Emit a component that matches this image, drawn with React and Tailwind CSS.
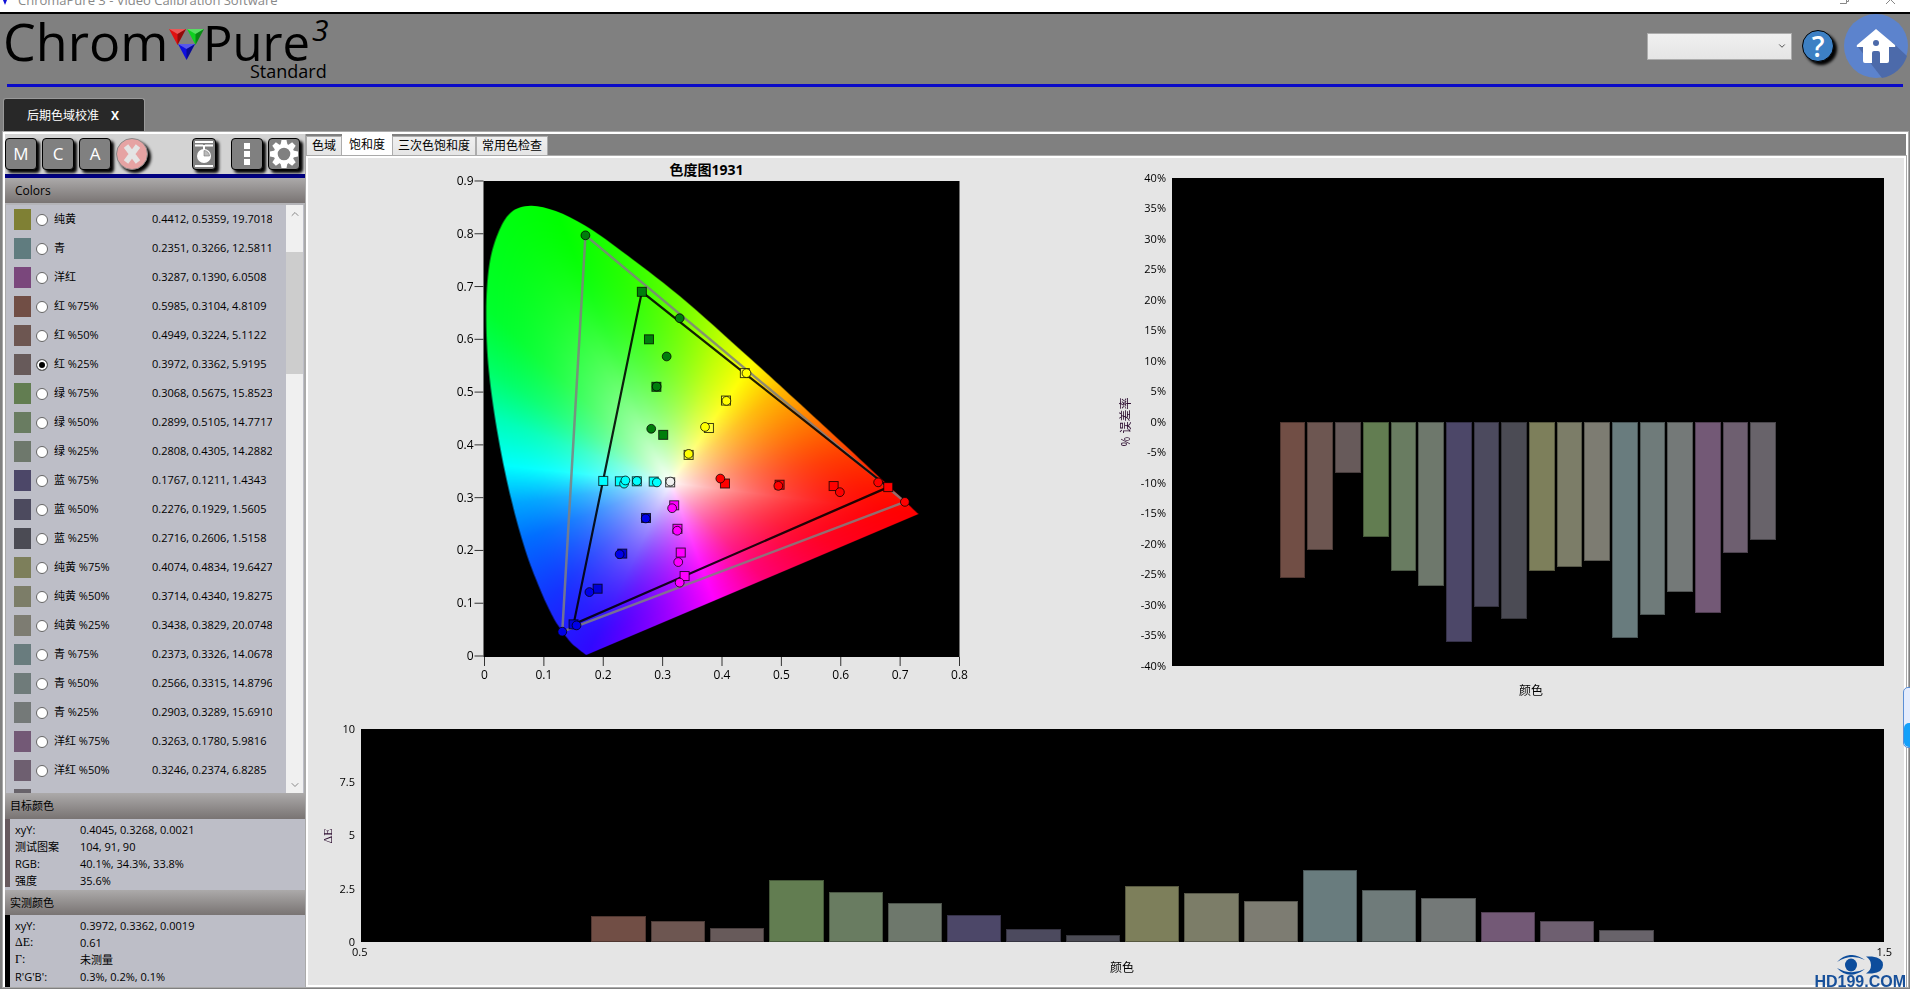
import React, { useEffect, useRef, useState } from "react";
import { FiChevronDown, FiChevronUp } from "react-icons/fi";

const readings = [
  { name: "纯黄", color: "#7f8034", xyY: "0.4412, 0.5359, 19.7018" },
  { name: "青", color: "#607c7f", xyY: "0.2351, 0.3266, 12.5811" },
  { name: "洋红", color: "#7a477c", xyY: "0.3287, 0.1390, 6.0508" },
  { name: "红 %75%", color: "#714e45", xyY: "0.5985, 0.3104, 4.8109", error: -25.6, deltaE: 1.2 },
  { name: "红 %50%", color: "#6d5651", xyY: "0.4949, 0.3224, 5.1122", error: -21, deltaE: 0.97 },
  { name: "红 %25%", color: "#675a5a", xyY: "0.3972, 0.3362, 5.9195", error: -8.4, deltaE: 0.64 },
  { name: "绿 %75%", color: "#627d51", xyY: "0.3068, 0.5675, 15.8523", error: -18.9, deltaE: 2.9 },
  { name: "绿 %50%", color: "#697c61", xyY: "0.2899, 0.5105, 14.7717", error: -24.4, deltaE: 2.37 },
  { name: "绿 %25%", color: "#6e786c", xyY: "0.2808, 0.4305, 14.2882", error: -26.9, deltaE: 1.82 },
  { name: "蓝 %75%", color: "#4c4768", xyY: "0.1767, 0.1211, 1.4343", error: -36, deltaE: 1.25 },
  { name: "蓝 %50%", color: "#4c4a5e", xyY: "0.2276, 0.1929, 1.5605", error: -30.3, deltaE: 0.61 },
  { name: "蓝 %25%", color: "#4b4b54", xyY: "0.2716, 0.2606, 1.5158", error: -32.3, deltaE: 0.33 },
  { name: "纯黄 %75%", color: "#7d7f5b", xyY: "0.4074, 0.4834, 19.6427", error: -24.5, deltaE: 2.63 },
  { name: "纯黄 %50%", color: "#7c7d68", xyY: "0.3714, 0.4340, 19.8275", error: -23.8, deltaE: 2.3 },
  { name: "纯黄 %25%", color: "#7d7c72", xyY: "0.3438, 0.3829, 20.0748", error: -22.8, deltaE: 1.93 },
  { name: "青 %75%", color: "#697c7e", xyY: "0.2373, 0.3326, 14.0678", error: -35.4, deltaE: 3.37 },
  { name: "青 %50%", color: "#6f7b7a", xyY: "0.2566, 0.3315, 14.8796", error: -31.6, deltaE: 2.46 },
  { name: "青 %25%", color: "#747978", xyY: "0.2903, 0.3289, 15.6910", error: -27.9, deltaE: 2.08 },
  { name: "洋红 %75%", color: "#735976", xyY: "0.3263, 0.1780, 5.9816", error: -31.3, deltaE: 1.42 },
  { name: "洋红 %50%", color: "#6e5f70", xyY: "0.3246, 0.2374, 6.8285", error: -21.5, deltaE: 0.99 },
  { name: "洋红 %25%", color: "#68636a", xyY: "0.3160, 0.2800, 7.9120", error: -19.3, deltaE: 0.58 },
];

const bars = readings.filter((r) => r.error !== undefined);

const targetInfo = [
  ["xyY:", "0.4045, 0.3268, 0.0021"],
  ["测试图案", "104, 91, 90"],
  ["RGB:", "40.1%, 34.3%, 33.8%"],
  ["强度", "35.6%"],
];

const measuredInfo = [
  ["xyY:", "0.3972, 0.3362, 0.0019"],
  ["ΔE:", "0.61"],
  ["Γ:", "未测量"],
  ["R'G'B':", "0.3%, 0.2%, 0.1%"],
];

// spectral locus, CIE 1931 xy
const locus = [
  [0.1714, 0.002], [0.1644, 0.0075], [0.1566, 0.0145], [0.144, 0.0275], [0.1241, 0.0578],
  [0.1096, 0.0868], [0.0913, 0.1327], [0.0687, 0.2007], [0.0454, 0.295], [0.0235, 0.4127],
  [0.0075, 0.5384], [0.0028, 0.65], [0.008, 0.74], [0.0225, 0.8], [0.044, 0.84],
  [0.0775, 0.853], [0.12, 0.843], [0.17, 0.815], [0.23, 0.768], [0.3287, 0.682],
  [0.448, 0.563], [0.5775, 0.43], [0.66, 0.344], [0.731, 0.269],
];

const WHITE = [0.3127, 0.329];

// fully saturated colours at points round the locus
const edgeColors = [
  [0.17, 0.002, [48, 8, 255]],
  [0.1, 0.1, [20, 50, 255]],
  [0.06, 0.22, [0, 110, 255]],
  [0.045, 0.29, [0, 165, 255]],
  [0.034, 0.362, [0, 255, 255]],
  [0.02, 0.45, [0, 255, 185]],
  [0.01, 0.54, [0, 255, 105]],
  [0.004, 0.66, [0, 255, 45]],
  [0.04, 0.83, [0, 255, 15]],
  [0.12, 0.843, [0, 255, 0]],
  [0.23, 0.768, [40, 255, 0]],
  [0.33, 0.68, [110, 255, 0]],
  [0.4, 0.61, [190, 255, 0]],
  [0.452, 0.559, [255, 255, 0]],
  [0.5, 0.51, [255, 185, 0]],
  [0.57, 0.438, [255, 110, 0]],
  [0.63, 0.375, [255, 55, 0]],
  [0.731, 0.269, [255, 0, 0]],
  [0.6, 0.206, [255, 0, 35]],
  [0.47, 0.145, [255, 0, 120]],
  [0.386, 0.104, [255, 0, 255]],
  [0.3, 0.063, [150, 0, 255]],
  [0.23, 0.03, [90, 0, 255]],
];

const plotX = (x) => x * 593.75;
const plotY = (y) => 475 - y * 527.8;

const gamutSquares = [
  ["#007e0b", [[0.265, 0.69], [0.277, 0.6], [0.2895, 0.51], [0.301, 0.419]]],
  ["#ffff3c", [[0.4385, 0.536], [0.4067, 0.484], [0.378, 0.432], [0.3438, 0.381]]],
  ["#ff0000", [[0.68, 0.32], [0.588, 0.322], [0.497, 0.3245], [0.405, 0.3268]]],
  ["#0000d8", [[0.15, 0.06], [0.1905, 0.1275], [0.232, 0.194], [0.272, 0.2615]]],
  ["#00ffff", [[0.2, 0.3317], [0.228, 0.331], [0.2565, 0.331], [0.285, 0.3305]]],
  ["#ff00ff", [[0.337, 0.1515], [0.3305, 0.196], [0.325, 0.241], [0.3195, 0.2855]]],
  ["#f0f0f0", [[0.3127, 0.329]]],
];

const gamutCircles = [
  ["#007e0b", [[0.17, 0.797], [0.3287, 0.64], [0.3068, 0.5675], [0.2899, 0.5105], [0.2808, 0.4305]]],
  ["#ffff00", [[0.4412, 0.5359], [0.4074, 0.4834], [0.3714, 0.434], [0.3438, 0.3829]]],
  ["#ff0000", [[0.663, 0.329], [0.708, 0.292], [0.5985, 0.3104], [0.4949, 0.3224], [0.3972, 0.3362]]],
  ["#0000e8", [[0.131, 0.046], [0.155, 0.058], [0.1767, 0.1211], [0.2276, 0.1929], [0.2716, 0.2606]]],
  ["#00ffff", [[0.2351, 0.3266], [0.2373, 0.3326], [0.2566, 0.3315], [0.2903, 0.3289]]],
  ["#ff00ff", [[0.3287, 0.139], [0.3263, 0.178], [0.3246, 0.2374], [0.316, 0.28]]],
  ["#f0f0f0", [[0.313, 0.3305]]],
];

// distance from the white point to the locus along an angle
const edgeDistance = (angle) => {
  const dx = Math.cos(angle);
  const dy = Math.sin(angle);
  let best = 1;
  for (let i = 0; i < locus.length; i++) {
    const [ax, ay] = locus[i];
    const [bx, by] = locus[(i + 1) % locus.length];
    const ex = bx - ax;
    const ey = by - ay;
    const det = ex * dy - ey * dx;
    if (Math.abs(det) < 1e-9) continue;
    const px = ax - WHITE[0];
    const py = ay - WHITE[1];
    const t = (ex * py - ey * px) / det;
    const s = (dx * py - dy * px) / det;
    if (t > 0 && s >= 0 && s <= 1) best = t;
  }
  return best;
};

const buildHueTable = () => {
  const stops = edgeColors
    .map(([x, y, rgb]) => ({ a: Math.atan2(y - WHITE[1], x - WHITE[0]), rgb }))
    .sort((p, q) => p.a - q.a);
  const table = [];
  for (let i = 0; i < 1440; i++) {
    const a = (i / 1440) * 2 * Math.PI - Math.PI;
    let n = stops.findIndex((s) => s.a > a);
    if (n === -1) n = 0;
    const hi = stops[n];
    const lo = stops[(n + stops.length - 1) % stops.length];
    let span = hi.a - lo.a;
    let off = a - lo.a;
    if (span < 0) span += 2 * Math.PI;
    if (off < 0) off += 2 * Math.PI;
    const k = off / span;
    table.push({ rgb: lo.rgb.map((c, j) => c + (hi.rgb[j] - c) * k), d: edgeDistance(a) });
  }
  return table;
};

const drawLocus = (canvas) => {
  const w = canvas.width;
  const h = canvas.height;
  const fill = document.createElement("canvas");
  fill.width = w;
  fill.height = h;
  const fctx = fill.getContext("2d");
  const img = fctx.createImageData(w, h);
  const table = buildHueTable();
  for (let py = 0; py < h; py++) {
    for (let px = 0; px < w; px++) {
      const dx = px / 593.75 - WHITE[0];
      const dy = (475 - py) / 527.8 - WHITE[1];
      const i = Math.floor(((Math.atan2(dy, dx) + Math.PI) / (2 * Math.PI)) * 1440) % 1440;
      const { rgb, d } = table[i];
      const t = Math.min(1, Math.hypot(dx, dy) / d);
      const sat = 1 - Math.pow(1 - t, 2.1);
      const o = (py * w + px) * 4;
      for (let c = 0; c < 3; c++) img.data[o + c] = 255 + (rgb[c] - 255) * sat;
      img.data[o + 3] = 255;
    }
  }
  fctx.putImageData(img, 0, 0);

  const ctx = canvas.getContext("2d");
  const pts = locus.map(([x, y]) => [plotX(x), plotY(y)]);
  ctx.clearRect(0, 0, w, h);
  ctx.save();
  ctx.beginPath();
  ctx.moveTo(pts[0][0], pts[0][1]);
  for (let i = 0; i < pts.length - 1; i++) {
    const p0 = pts[Math.max(0, i - 1)];
    const p1 = pts[i];
    const p2 = pts[i + 1];
    const p3 = pts[Math.min(pts.length - 1, i + 2)];
    ctx.bezierCurveTo(
      p1[0] + (p2[0] - p0[0]) / 6, p1[1] + (p2[1] - p0[1]) / 6,
      p2[0] - (p3[0] - p1[0]) / 6, p2[1] - (p3[1] - p1[1]) / 6,
      p2[0], p2[1]
    );
  }
  ctx.closePath();
  ctx.clip();
  ctx.drawImage(fill, 0, 0);
  ctx.restore();
};

const triangle = (pts) => pts.map(([x, y]) => `${plotX(x)},${plotY(y)}`).join(" ");

const ChromaticityChart = () => {
  const canvasRef = useRef(null);

  useEffect(() => {
    drawLocus(canvasRef.current);
  }, []);

  return (
    <svg viewBox="0 0 797 542" className="w-full h-full text-[12px]">
      <text x="398" y="17" textAnchor="middle" className="text-[14px] font-bold">色度图1931</text>
      <g transform="translate(176 23)">
        <rect x="-1" width="476" height="476" fill="#000" />
        <foreignObject width="476" height="476">
          <canvas ref={canvasRef} width={476} height={476} className="block" />
        </foreignObject>
        {[0, 1, 2, 3, 4, 5, 6, 7, 8, 9].map((n) => (
          <g key={n}>
            <line x1="-10" x2="-1" y1={plotY(n / 10)} y2={plotY(n / 10)} stroke="#333" />
            <text x="-11" y={plotY(n / 10) + 4} textAnchor="end">{n / 10}</text>
          </g>
        ))}
        {[0, 1, 2, 3, 4, 5, 6, 7, 8].map((n) => (
          <g key={n}>
            <line x1={plotX(n / 10)} x2={plotX(n / 10)} y1="476" y2="485" stroke="#333" />
            <text x={plotX(n / 10)} y="498" textAnchor="middle">{n / 10}</text>
          </g>
        ))}
        <polygon points={triangle([[0.708, 0.292], [0.17, 0.797], [0.131, 0.046]])} fill="none" stroke="#808080" strokeOpacity="0.85" strokeWidth="2.5" />
        <polygon points={triangle([[0.68, 0.32], [0.265, 0.69], [0.15, 0.06]])} fill="none" stroke="#000" strokeOpacity="0.88" strokeWidth="2.2" />
        {gamutSquares.map(([color, pts]) =>
          pts.map(([x, y]) => (
            <rect key={`${x}-${y}`} x={plotX(x) - 4.5} y={plotY(y) - 4.5} width="9" height="9" fill={color} stroke="#000" strokeOpacity="0.75" />
          ))
        )}
        {gamutCircles.map(([color, pts]) =>
          pts.map(([x, y]) => (
            <circle key={`${x}-${y}`} cx={plotX(x)} cy={plotY(y)} r="4.4" fill={color} stroke="#000" strokeOpacity="0.75" />
          ))
        )}
      </g>
    </svg>
  );
};

const YTicks = ({ ticks }) => (
  <div className="flex flex-col justify-between text-right text-[11px] pr-[6px]">
    {ticks.map((t) => (
      <span key={t} className="h-0 flex items-center justify-end">{t}</span>
    ))}
  </div>
);

const YTitle = ({ children }) => (
  <div className="w-4 flex items-center justify-center">
    <span className="-rotate-90 whitespace-nowrap text-[12px] text-[#2a0a2e]">{children}</span>
  </div>
);

const ErrorChart = () => (
  <div className="flex flex-col h-full pt-5 pl-3 pr-5">
    <div className="flex-1 flex">
      <YTitle>% 误差率</YTitle>
      <div className="w-[38px] flex justify-end">
        <YTicks ticks={["40%", "35%", "30%", "25%", "20%", "15%", "10%", "5%", "0%", "-5%", "-10%", "-15%", "-20%", "-25%", "-30%", "-35%", "-40%"]} />
      </div>
      <div className="flex-1 bg-black flex flex-col">
        <div className="flex-1" />
        <div className="flex-1 flex items-start gap-[2px] w-[70%] mx-auto px-px">
          {bars.map((b) => (
            <div key={b.name} className="flex-1 border border-black/30" style={{ height: `${(-b.error / 40) * 100}%`, backgroundColor: b.color }} />
          ))}
        </div>
      </div>
    </div>
    <div className="h-[34px] pl-[60px] pt-4 text-[12px] text-center">颜色</div>
  </div>
);

const DeltaEChart = () => (
  <div className="flex flex-col pt-[29px] pl-3 pr-5">
    <div className="flex-1 flex">
      <YTitle><span className="font-['Liberation_Serif']">ΔE</span></YTitle>
      <div className="w-[25px] flex justify-end">
        <YTicks ticks={["10", "7.5", "5", "2.5", "0"]} />
      </div>
      <div className="flex-1 bg-black flex items-end justify-center">
        <div className="w-[70%] h-full flex items-end gap-[5px] px-[2px]">
          {bars.map((b) => (
            <div key={b.name} className="flex-1 border border-black/30" style={{ height: `${b.deltaE * 10}%`, backgroundColor: b.color }} />
          ))}
        </div>
      </div>
    </div>
    <div className="h-[43px] pl-8 -mr-2 flex justify-between text-[11px] leading-5">
      <span>0.5</span>
      <span className="pt-4 text-[12px]">颜色</span>
      <span>1.5</span>
    </div>
  </div>
);

const ToolButton = ({ label, className = "w-8", children }) => (
  <button
    type="button"
    aria-label={label}
    className={`${className} h-8 rounded-[4px] border border-black bg-[#808080] text-white text-[17px] flex items-center justify-center shadow-[3px_3px_3px_#000]`}
  >
    {children}
  </button>
);

const SectionHeader = ({ children, className }) => (
  <h2 className={`${className} flex items-center bg-linear-to-b from-[#acaaaa] to-[#797473]`}>{children}</h2>
);

const InfoRows = ({ rows, barClass }) => (
  <div className="h-full flex text-[11px] leading-[17px]">
    <div className={`w-[5px] ${barClass}`} />
    <dl className="grid grid-cols-[65px_1fr] content-start pl-[5px] pt-[2px]">
      {rows.map(([label, value]) => (
        <React.Fragment key={label}>
          <dt className={/[ΔΓ]/.test(label) ? "font-['Liberation_Serif'] text-[12px]" : ""}>{label}</dt>
          <dd>{value}</dd>
        </React.Fragment>
      ))}
    </dl>
  </div>
);

const Logo = () => (
  <svg viewBox="0 0 340 70" className="w-[340px] h-[70px]" fill="#000">
    <defs>
      <g id="gem">
        <path d="M0 0h17L8.500 16z" />
        <path d="M0 0h17L8.500 5z" fill="#fff" fillOpacity="0.3" />
        <path d="M17 0L8.500 16V5z" fill="#000" fillOpacity="0.35" />
      </g>
    </defs>
    <text x="1" y="47" className="text-[52px]">Chrom</text>
    <use href="#gem" x="167" y="15" fill="#e01010" />
    <use href="#gem" x="185" y="15" fill="#10d020" />
    <use href="#gem" x="176" y="30" fill="#1010e0" />
    <text x="201" y="47" className="text-[49px]">Pure</text>
    <text x="310" y="27" className="text-[30px] italic">3</text>
    <text x="248" y="64" className="text-[18px]">Standard</text>
  </svg>
);

const Header = () => (
  <header className="h-[73px] flex justify-between border-b-[3px] border-[#0a0ac8] mx-[7px]">
    <h1 className="-ml-[5px]">
      <Logo />
    </h1>
    <div className="flex items-center -mr-[5px] -mt-[6px]">
      <select aria-label="Profile" className="appearance-none w-[145px] h-[27px] border border-[#acacac] bg-linear-to-b from-[#f0f0f0] to-[#e5e5e5]" />
      <FiChevronDown size={10} className="-ml-[15px] mr-[5px] text-[#333] pointer-events-none" />
      <button
        type="button"
        aria-label="Help"
        className="ml-[10px] w-8 h-8 rounded-full border border-black bg-[#3d80c4] text-white text-[28px] font-semibold leading-none flex items-center justify-center shadow-[3px_3px_3px_#000]"
      >
        ?
      </button>
      <button type="button" aria-label="Home" className="ml-[10px] w-16 h-16">
        <svg viewBox="0 0 64 64" className="w-16 h-16">
          <circle cx="32" cy="32" r="32" fill="#5c83cd" />
          <path d="M14 33L38 64A32 32 0 0 0 63 42L48 28z" fill="#4c6aaa" />
          <path d="M32 15L13 31q-1 2 1 2h5v14q0 2 2 2h7V39q0-2 2-2h4q2 0 2 2v10h7q2 0 2-2V33h5q2 0 1-2z" fill="#fff" />
          <circle cx="32" cy="29" r="3" fill="#4c6aaa" />
        </svg>
      </button>
    </div>
  </header>
);

const tabs = ["色域", "饱和度", "三次色饱和度", "常用色检查"];

const App = () => {
  const [selected, setSelected] = useState("红 %25%");
  const [tab, setTab] = useState("饱和度");

  return (
    <div className="relative h-screen flex flex-col overflow-hidden bg-[#808080] text-black font-['Open_Sans','Noto_Sans_CJK_SC',sans-serif]">
      {/* Window title */}
      <div className="h-[14px] bg-white border-b-2 border-black flex items-end justify-between overflow-hidden text-[13px] text-[#888]">
        <div className="flex items-center h-[22px] pl-px gap-[9px]">
          <svg viewBox="0 0 8 12" className="w-2 h-3">
            <path d="M0 0h8L4 10z" fill="#1010d8" />
          </svg>
          <span>ChromaPure 3 - Video Calibration Software</span>
        </div>
        <svg viewBox="0 0 60 12" className="w-[60px] h-3 mr-[10px]" fill="none" stroke="#888">
          <path d="M-.5-6v9.500h7v-9M6.500 1.500h2v-7M46 4l9-9m0 9l-9-9" />
        </svg>
      </div>

      <Header />

      {/* Module tab */}
      <div className="mt-[11px] ml-[3px] flex">
        <button type="button" className="h-[34px] w-[142px] rounded-t-[3px] border border-b-0 border-[#999] bg-[#282828] text-white text-[12px] flex items-center justify-center gap-3 pr-[2px]">
          后期色域校准 <b>X</b>
        </button>
      </div>

      <main className="flex-1 min-h-0 ml-[3px] mr-[2px] mb-[2px] border-2 border-b-0 border-white outline outline-[#aaa] flex">
        {/* Sidebar */}
        <aside className="w-[300px] flex flex-col bg-[#bdbec7]">
          <div className="h-11 bg-[#d3d3d3] border-b-4 border-[#000080] flex items-center gap-[5px] pr-[5px]">
            <ToolButton label="M">M</ToolButton>
            <ToolButton label="C">C</ToolButton>
            <ToolButton label="A">A</ToolButton>
            <button type="button" aria-label="Stop" className="w-8 h-8 rounded-full border border-[#888] bg-[#e6a3a3] flex items-center justify-center shadow-[3px_3px_3px_#000]">
              <svg viewBox="0 0 20 20" className="w-5 h-5">
                <path d="M4 2l12 16M16 2L4 18" stroke="#e4e4e4" strokeWidth="5.500" />
              </svg>
            </button>
            <div className="flex-1" />
            <ToolButton label="Timer" className="w-6 mr-[10px]">
              <svg viewBox="0 0 20 28" className="w-5 h-7">
                <path d="M1 2h18M1 5.500h8M11 5.500h8M10 5v5M1 26h18" stroke="#fff" strokeWidth="2" fill="none" />
                <circle cx="10" cy="16" r="7" fill="#fff" />
                <path d="M10 16V10.500A5.500 5.500 0 0 1 15.500 16z" fill="#bbb" stroke="#777" strokeWidth="0.600" />
              </svg>
            </ToolButton>
            <ToolButton label="More">
              <svg viewBox="0 0 6 24" className="w-[6px] h-6" fill="#fff">
                <path d="M0 1h6v6H0zM0 9h6v6H0zM0 17h6v6H0z" />
              </svg>
            </ToolButton>
            <ToolButton label="Settings">
              <svg viewBox="-14 -14 28 28" className="w-7 h-7 shrink-0">
                {[0, 45, 90, 135, 180, 225, 270, 315].map((a) => (
                  <path key={a} transform={`rotate(${a})`} d="M-3.500-9L-2.500-14H2.500L3.500-9z" fill="#fff" />
                ))}
                <circle r="8.300" fill="none" stroke="#fff" strokeWidth="4" />
              </svg>
            </ToolButton>
          </div>

          <SectionHeader className="h-[25px] pl-[10px] text-[12px]">Colors</SectionHeader>
          <div className="flex-1 min-h-0 flex border-t-2 border-x border-[#aaa] border-t-[#b4b4b8]">
            <ul className="flex-1 min-w-0 overflow-hidden text-[11px]">
              {readings.map((r) => (
                <li key={r.name}>
                  <label className="h-[29px] pl-2 flex items-center">
                    <span className="w-[17px] h-[21px] mr-[5px]" style={{ backgroundColor: r.color }} />
                    <input
                      type="radio"
                      name="reading"
                      checked={selected === r.name}
                      onChange={() => setSelected(r.name)}
                      className="appearance-none w-3 h-3 mr-[6px] rounded-full border border-[#666] bg-white checked:bg-black checked:shadow-[inset_0_0_0_2px_#fff]"
                    />
                    <span className="w-[98px]">{r.name}</span>
                    <span className="w-[120px] overflow-hidden whitespace-nowrap">{r.xyY}</span>
                  </label>
                </li>
              ))}
            </ul>
            <div className="w-[17px] mr-px bg-[#f0f0f0] flex flex-col text-[#888]">
              <button type="button" aria-label="Scroll up" className="h-[17px] flex items-center justify-center">
                <FiChevronUp size={12} />
              </button>
              <div className="flex-1 flex flex-col">
                <div className="h-[30px]" />
                <div className="h-[122px] bg-[#cdcdcd]" />
              </div>
              <button type="button" aria-label="Scroll down" className="h-[17px] flex items-center justify-center">
                <FiChevronDown size={12} />
              </button>
            </div>
          </div>

          <SectionHeader className="h-[26px] pl-[5px] pt-px text-[11px]">目标颜色</SectionHeader>
          <div className="h-[71px] pb-[3px]">
            <InfoRows rows={targetInfo} barClass="bg-[#675a5e]" />
          </div>
          <SectionHeader className="h-[25px] pl-[5px] pt-px text-[11px]">实测颜色</SectionHeader>
          <div className="h-[72px]">
            <InfoRows rows={measuredInfo} barClass="bg-black" />
          </div>
        </aside>

        {/* Charts */}
        <section className="flex-1 min-w-0 flex flex-col border-l border-[#aaa]">
          <div role="tablist" className="h-[22px] flex items-end text-[12px]">
            {tabs.map((t) => (
              <button
                key={t}
                type="button"
                role="tab"
                aria-selected={tab === t}
                onClick={() => setTab(t)}
                className={
                  tab === t
                    ? "h-[22px] px-[7px] bg-white"
                    : "h-5 px-[5px] border border-[#acacac] bg-linear-to-b from-[#f0f0f0] to-[#e5e5e5] leading-4"
                }
              >
                {t}
              </button>
            ))}
          </div>
          <div className="flex-1 min-h-0 border-2 border-white bg-[#e5e5e5] outline outline-[#aaa] grid grid-rows-[542fr_285fr]">
            <div className="grid grid-cols-2 min-h-0">
              <ChromaticityChart />
              <ErrorChart />
            </div>
            <DeltaEChart />
          </div>
        </section>
      </main>

      {/* Docked side handle */}
      <div className="absolute -right-2 top-[687px] w-[15px] h-[61px] rounded-[5px] border border-[#5b8fd6] bg-[#e4ecfd] overflow-hidden flex items-end">
        <div className="w-full h-6 rounded-[5px] bg-[#14a0fa]" />
      </div>

      {/* Watermark */}
      <div className="absolute right-1 bottom-0 flex flex-col items-center text-[#17509a] font-['Liberation_Sans'] text-[16px] leading-[14px] font-bold">
        <svg viewBox="0 0 46 20" className="w-[46px] h-5" fill="#0d4d9c">
          <path d="M0 7Q12-6 28 5Q14-2 0 7zM0 13q12 13 28 1q-14 7-28-1z" />
          <ellipse cx="14" cy="10" rx="6" ry="6.500" />
          <path d="M29 1.500h6q11 1 11 8.500t-11 8.500h-6q5-3 5-8.500t-5-8.500z" />
        </svg>
        HD199.COM
      </div>
    </div>
  );
};

export default App;
